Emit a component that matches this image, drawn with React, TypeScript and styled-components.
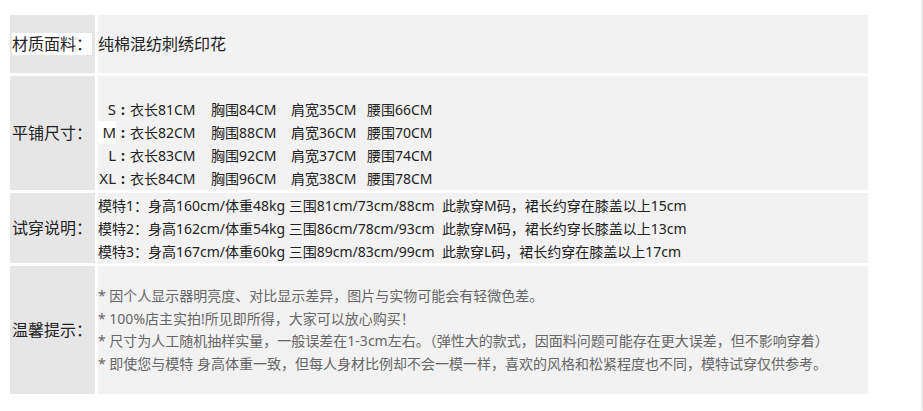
import styled, { createGlobalStyle } from 'styled-components';

const GlobalStyle = createGlobalStyle`
  html, body {
    margin: 0;
    padding: 0;
    background: #fff;
  }
  body {
    font-family: "Noto Sans", "Noto Sans CJK SC", sans-serif;
    color: #222;
  }
`;

const Page = styled.div`
  position: relative;
  width: 923px;
  height: 411px;
  box-sizing: border-box;
  padding: 15px 0 0 10px;
  overflow: hidden;

  &::after {
    content: '';
    position: absolute;
    top: 0;
    right: 0;
    width: 3px;
    height: 100%;
    background: linear-gradient(to right, #fff, #e4e4e4);
  }
`;

const Table = styled.div`
  width: 858px;
  display: grid;
  grid-template-columns: 85px 1fr;
  gap: 3px;
`;

const Label = styled.div`
  background: #e6e6e6;
  display: flex;
  align-items: center;
  padding-left: 2px;
  font-size: 16px;
  color: #222;
`;

const LabelText = styled.span<{ highlight?: boolean }>`
  line-height: 22px;
  background: ${p => (p.highlight ? '#fff' : 'transparent')};
`;

const Cell = styled.div<{ height: number; pad?: string; muted?: boolean }>`
  background: #f2f2f2;
  height: ${p => p.height}px;
  box-sizing: border-box;
  padding: ${p => p.pad ?? '0'};
  display: flex;
  flex-direction: column;
  justify-content: center;
  font-size: 14px;
  line-height: 23px;
  color: ${p => (p.muted ? '#666' : '#222')};
  white-space: nowrap;
`;

const Material = styled.div`
  font-size: 16px;
`;

const SizeLine = styled.div`
  display: flex;
  align-items: baseline;
`;

const SizeName = styled.span<{ highlight?: boolean }>`
  width: 18px;
  text-align: right;
  font-size: 15px;
  background: ${p => (p.highlight ? '#fff' : 'transparent')};
`;

const Colon = styled.span`
  width: 14px;
  text-align: center;
  font-weight: 700;
`;

const Measure = styled.span<{ w: number }>`
  width: ${p => p.w}px;
`;

const Line = styled.div`
  line-height: 23px;
`;

const Tip = styled.div`
  line-height: 22.5px;
`;

const sizes = [
  { name: 'S', vals: ['衣长81CM', '胸围84CM', '肩宽35CM', '腰围66CM'] },
  { name: 'M', vals: ['衣长82CM', '胸围88CM', '肩宽36CM', '腰围70CM'], mark: true },
  { name: 'L', vals: ['衣长83CM', '胸围92CM', '肩宽37CM', '腰围74CM'] },
  { name: 'XL', vals: ['衣长84CM', '胸围96CM', '肩宽38CM', '腰围78CM'] },
];

const models = [
  '模特1：身高160cm/体重48kg 三围81cm/73cm/88cm\u00a0\u00a0此款穿M码，裙长约穿在膝盖以上15cm',
  '模特2：身高162cm/体重54kg 三围86cm/78cm/93cm\u00a0\u00a0此款穿M码，裙长约穿长膝盖以上13cm',
  '模特3：身高167cm/体重60kg 三围89cm/83cm/99cm\u00a0\u00a0此款穿L码，裙长约穿在膝盖以上17cm',
];

const tips = [
  '* 因个人显示器明亮度、对比显示差异，图片与实物可能会有轻微色差。',
  '* 100%店主实拍!所见即所得，大家可以放心购买！',
  '* 尺寸为人工随机抽样实量，一般误差在1-3cm左右。（弹性大的款式，因面料问题可能存在更大误差，但不影响穿着）',
  '* 即使您与模特 身高体重一致，但每人身材比例却不会一模一样，喜欢的风格和松紧程度也不同，模特试穿仅供参考。',
];

export default function App() {
  return (
    <Page>
      <GlobalStyle />
      <Table>
        <Label>
          <LabelText highlight>材质面料：</LabelText>
        </Label>
        <Cell height={58}>
          <Material>纯棉混纺刺绣印花</Material>
        </Cell>

        <Label>
          <LabelText>平铺尺寸：</LabelText>
        </Label>
        <Cell height={114} pad="22px 0 0 0">
          {sizes.map(s => (
            <SizeLine key={s.name}>
              <SizeName highlight={s.mark}>{s.name}</SizeName>
              <Colon>:</Colon>
              <Measure w={81}>{s.vals[0]}</Measure>
              <Measure w={80}>{s.vals[1]}</Measure>
              <Measure w={76}>{s.vals[2]}</Measure>
              <Measure w={70}>{s.vals[3]}</Measure>
            </SizeLine>
          ))}
        </Cell>

        <Label>
          <LabelText>试穿说明：</LabelText>
        </Label>
        <Cell height={70}>
          {models.map(m => (
            <Line key={m}>{m}</Line>
          ))}
        </Cell>

        <Label>
          <LabelText>温馨提示：</LabelText>
        </Label>
        <Cell height={128} muted>
          {tips.map(t => (
            <Tip key={t}>{t}</Tip>
          ))}
        </Cell>
      </Table>
    </Page>
  );
}
